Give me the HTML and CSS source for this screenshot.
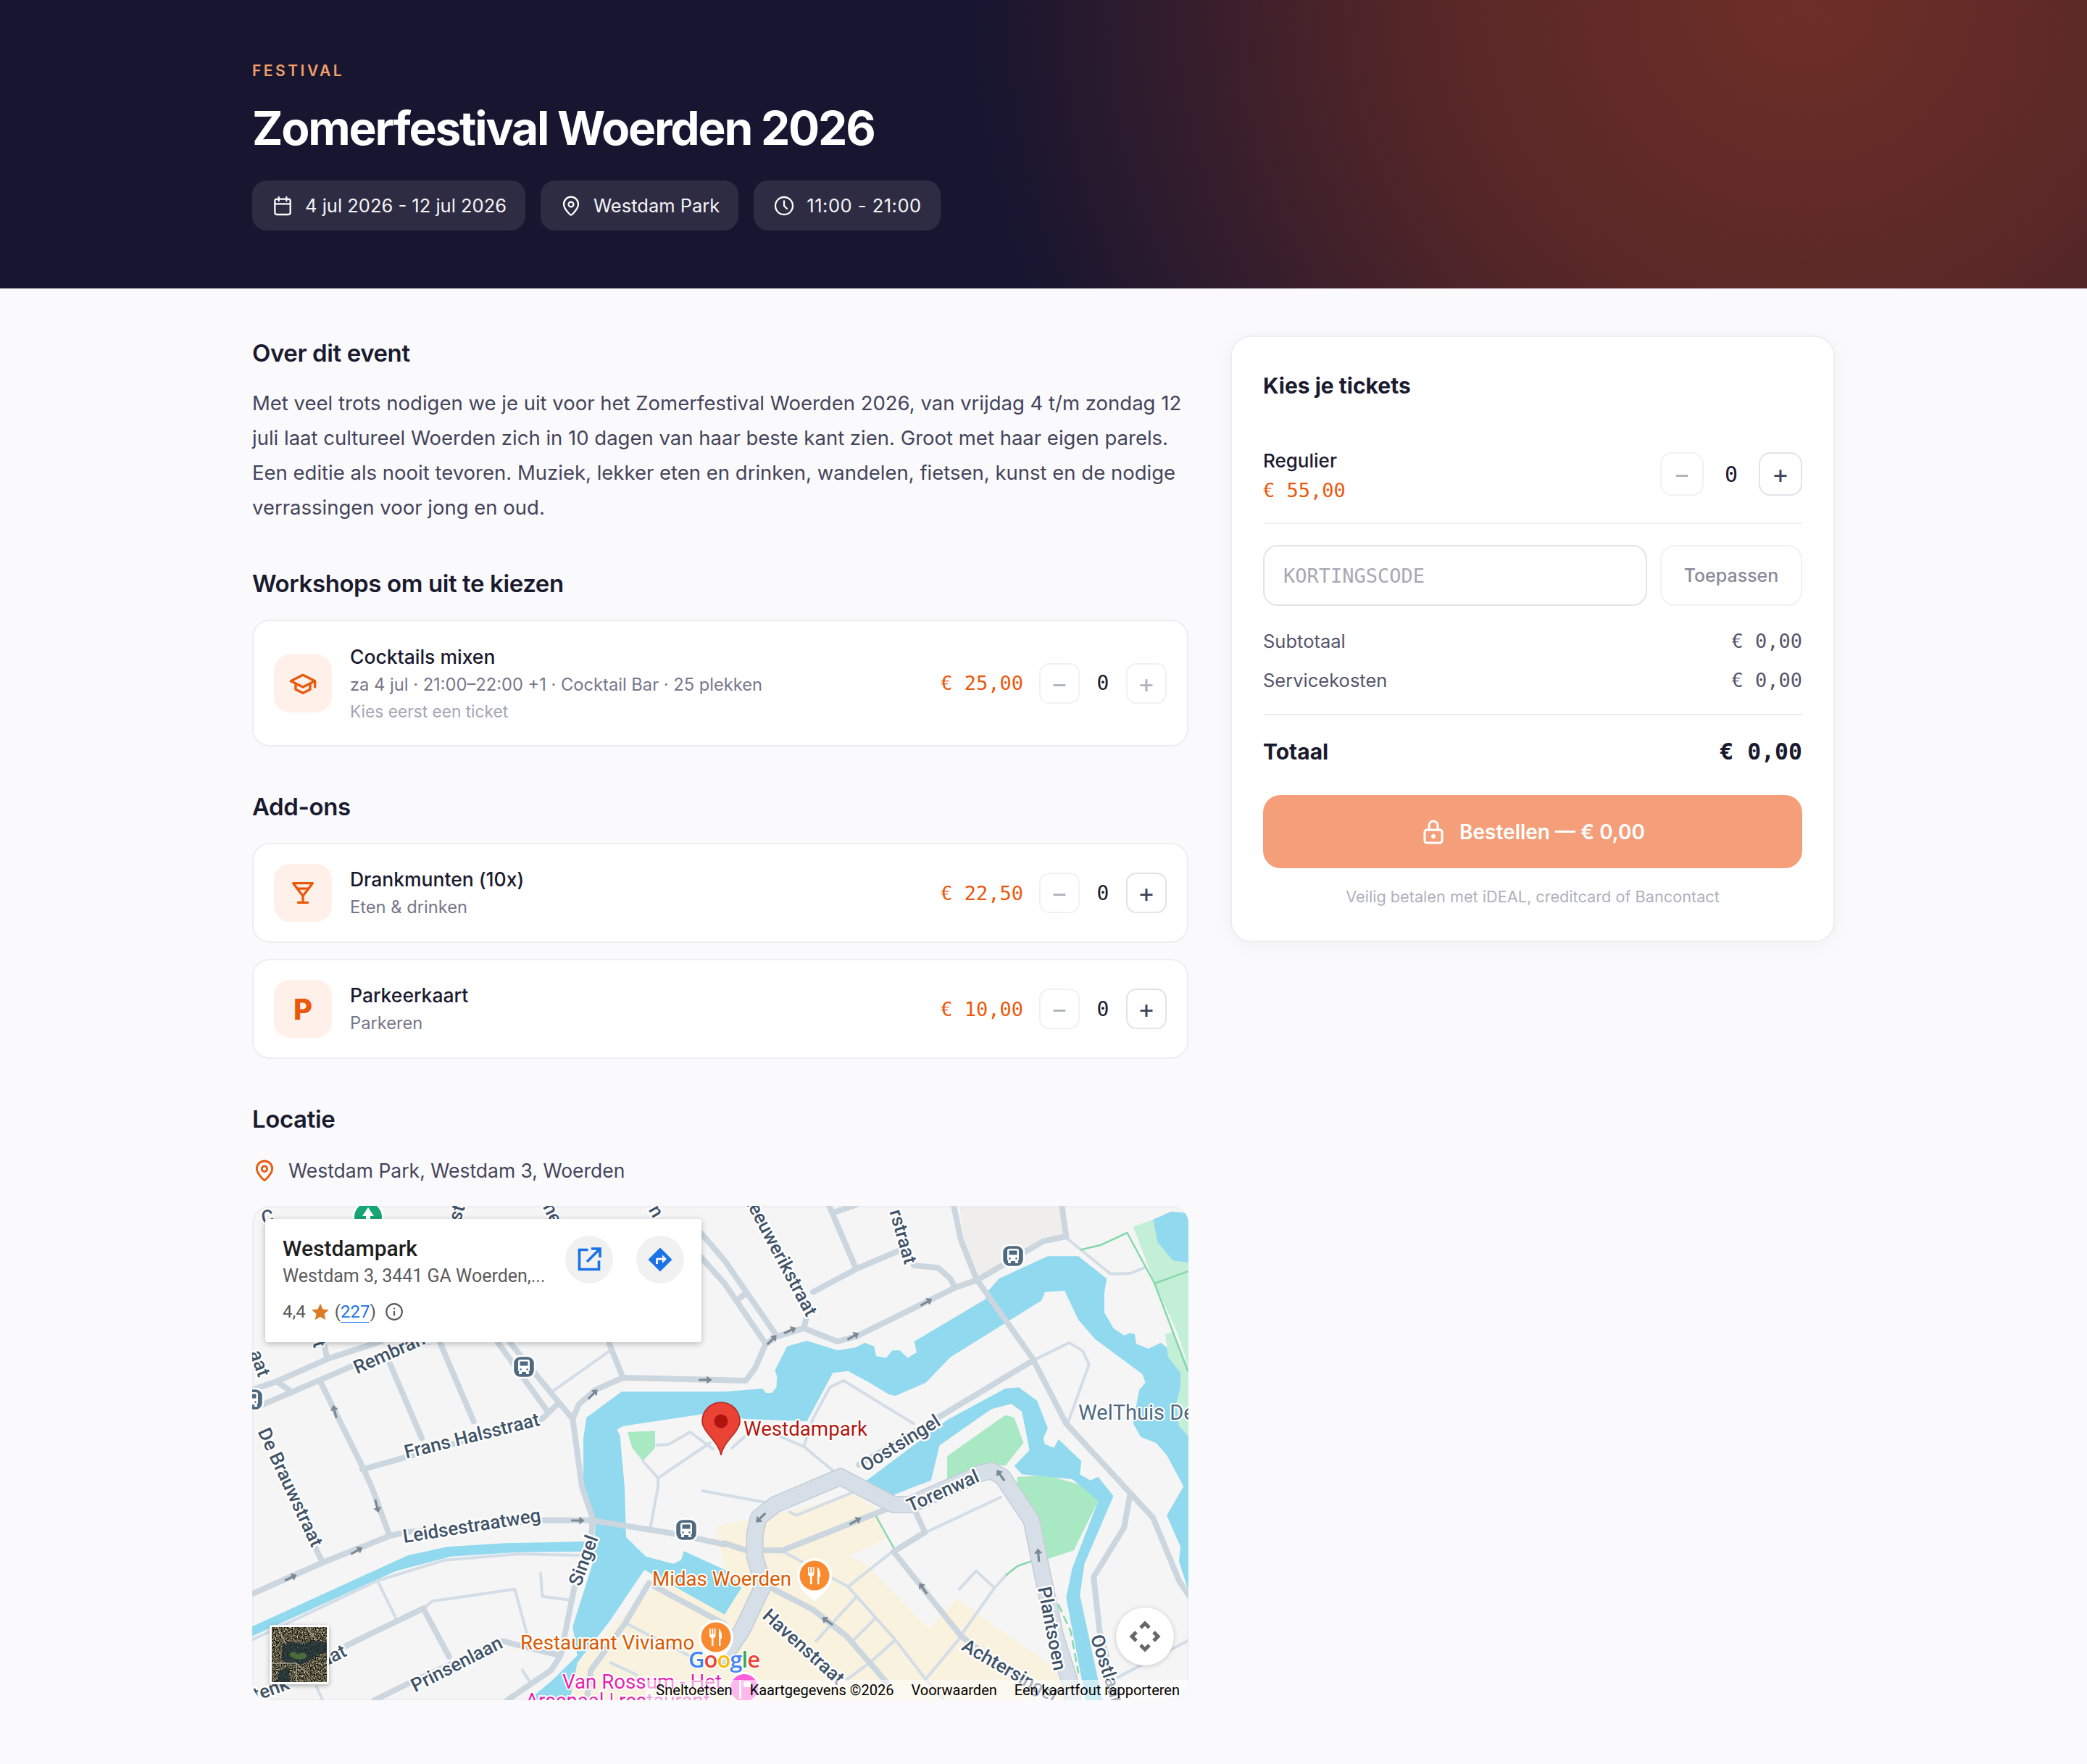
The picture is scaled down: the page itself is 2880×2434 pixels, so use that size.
FILE: index.html
```html
<!DOCTYPE html>
<html lang="nl">
<head>
  <meta charset="UTF-8">
  <meta name="viewport" content="width=device-width, initial-scale=1.0">
  <title>Zomerfestival Woerden 2026</title>
  <link rel="stylesheet" href="styles.css">
</head>
<body>
  <header class="hero">
    <div class="hero-inner">
      <div class="eyebrow">FESTIVAL</div>
      <h1>Zomerfestival Woerden 2026</h1>
      <div class="chips">
        <div class="chip">
          <svg class="chip-icon" viewBox="0 0 24 24"><rect x="4" y="5" width="16" height="16" rx="2"/><path d="M16 3v4M8 3v4M4 10h16"/></svg>
          4 jul 2026 - 12 jul 2026
        </div>
        <div class="chip">
          <svg class="chip-icon" viewBox="0 0 24 24"><circle cx="12" cy="10.5" r="2.6"/><path d="M12 21.5c-.6 0-7.5-6.2-7.5-11.2a7.5 7.5 0 0 1 15 0c0 5-6.9 11.2-7.5 11.2z"/></svg>
          Westdam Park
        </div>
        <div class="chip chip-time">
          <svg class="chip-icon" viewBox="0 0 24 24"><circle cx="12" cy="12" r="9"/><path d="M12 7v5l3 3"/></svg>
          11:00 - 21:00
        </div>
      </div>
    </div>
  </header>

  <main class="layout">
    <div class="content">
      <section class="section">
        <h2>Over dit event</h2>
        <p class="about">Met veel trots nodigen we je uit voor het Zomerfestival Woerden 2026, van vrijdag 4 t/m zondag 12 juli laat cultureel Woerden zich in 10 dagen van haar beste kant zien. Groot met haar eigen parels. Een editie als nooit tevoren. Muziek, lekker eten en drinken, wandelen, fietsen, kunst en de nodige verrassingen voor jong en oud.</p>
      </section>

      <section class="section">
        <h2 class="list-title">Workshops om uit te kiezen</h2>
        <div class="item item-workshop">
          <div class="item-icon">
            <svg viewBox="0 0 24 24"><path d="M22 10 12 5 2 10l10 5 10-5v5"/><path d="M6 12.2V17l6 3 6-3v-4.8"/></svg>
          </div>
          <div class="item-text">
            <div class="item-name">Cocktails mixen</div>
            <div class="item-meta">za 4 jul · 21:00–22:00 +1 · Cocktail Bar · 25 plekken</div>
            <div class="item-note">Kies eerst een ticket</div>
          </div>
          <div class="item-price">€ 25,00</div>
          <div class="qty">
            <button class="qty-btn off">−</button>
            <span class="qty-val">0</span>
            <button class="qty-btn off">+</button>
          </div>
        </div>
      </section>

      <section class="section">
        <h2 class="list-title">Add-ons</h2>
        <div class="item-list">
          <div class="item">
            <div class="item-icon">
              <svg viewBox="0 0 24 24"><path d="M4 4h16l-8 10.5z"/><path d="M7.5 8.5h9M12 14.5V20M8 20h8"/></svg>
            </div>
            <div class="item-text">
              <div class="item-name">Drankmunten (10x)</div>
              <div class="item-meta">Eten &amp; drinken</div>
            </div>
            <div class="item-price">€ 22,50</div>
            <div class="qty">
              <button class="qty-btn off">−</button>
              <span class="qty-val">0</span>
              <button class="qty-btn">+</button>
            </div>
          </div>
          <div class="item">
            <div class="item-icon item-icon-letter">P</div>
            <div class="item-text">
              <div class="item-name">Parkeerkaart</div>
              <div class="item-meta">Parkeren</div>
            </div>
            <div class="item-price">€ 10,00</div>
            <div class="qty">
              <button class="qty-btn off">−</button>
              <span class="qty-val">0</span>
              <button class="qty-btn">+</button>
            </div>
          </div>
        </div>
      </section>

      <section class="section section-last">
        <h2 class="location-title">Locatie</h2>
        <div class="address">
          <svg class="address-icon" viewBox="0 0 24 24"><circle cx="12" cy="10.5" r="2.6"/><path d="M12 21.5c-.6 0-7.5-6.2-7.5-11.2a7.5 7.5 0 0 1 15 0c0 5-6.9 11.2-7.5 11.2z"/></svg>
          Westdam Park, Westdam 3, Woerden
        </div>

        <div class="map">
          <!-- base map: coordinates are traced, so the drawing is stretched to fit -->
          <svg class="map-layer" viewBox="19 39 3070 2046" preserveAspectRatio="none">
            <path class="m-grey" d="M2338 30H2673L2683 160 2613 180 2398 330 2358 230Z"/>
            <path class="m-sand" d="M1568 1545L1540 1365 1788 1300 1998 1230 2068 1300 2093 1420 1978 1485 2038 1530 2238 1790 2328 1665 2648 1950 2698 2090H1060L1085 1930 1215 1760 1340 1620Z"/>
            <path class="m-pale" d="M2908 125L2973 95 2988 190 3038 265 3095 275V720L3048 550 2978 360Z"/>
            <path class="m-pale" d="M3013 570L3040 560 3095 720V1000L3058 950 3048 860 3063 790 3063 730 3023 665Z"/>
            <path class="m-green" d="M1250 975L1340 970 1340 1040 1300 1095 1265 1040Z"/>
            <path class="m-green" d="M2298 1075L2488 905 2518 915 2548 1020 2488 1115 2438 1105 2298 1170Z"/>
            <path class="m-green" d="M2528 1160L2628 1155 2738 1195 2793 1260 2713 1465 2628 1500 2603 1340 2528 1200Z"/>

            <path class="m-water" d="M1140 1500L1145 1340 1105 1200 1105 1000 1115 915 1230 808H1568L1693 795 1703 813 1723 813 1738 790 1740 745 1733 720 1773 620 1838 597 1938 637 1998 625 2028 605 2058 620 2065 660 2098 668 2118 637 2143 637 2168 668 2198 645 2190 600 2423 425 2433 390 2468 340 2628 247 2728 247 2821 340 2813 400 2813 480 2843 545 2878 575 2898 565 2913 570 2918 610 2958 630 2998 605 3018 625 3023 665 3063 730 3063 790 3048 860 3058 950 3095 1000V1620H3086L3058 1510 3063 1450 3018 1320 3073 1200 3018 1070 2983 1020 2933 995 2908 940 2923 830 2928 800 2948 770 2938 735 2783 590 2728 510 2683 390 2618 395 2608 430 2308 665 2228 770 2128 825 2108 820 2043 770 1973 722 1923 730 1838 930 1628 920 1568 885 1500 900 1235 950 1215 965 1225 990 1240 1200 1245 1410 1310 1490 1400 1520 1425 1505 1435 1468 1568 1545 1623 1620 1568 1730 1305 1545 1190 1760 1085 1930 1060 2090H920L1005 2000 1085 1900 1070 1780Z"/>
            <path class="m-water" d="M2008 1200L2298 925 2488 795 2533 790 2593 845 2628 960 2613 1000 2618 1025 2648 1040 2663 1005 2738 1095 2733 1150 2768 1175 2793 1160 2818 1200 2843 1240 2748 1520 2733 1650 2808 2090H2753L2688 1660 2708 1540 2793 1260 2738 1200 2708 1170 2543 1150 2518 1115 2568 1050 2543 890 2508 858 2443 880 2273 1030 2245 1175 2122 1235Z"/>
            <path class="m-water" d="M2973 95L3033 62 3095 70V275L3038 265 2988 190Z"/>
            <path class="m-water" d="M19 1780L530 1485 660 1450 850 1435 1110 1428 1100 1470 890 1472 670 1490 490 1550 19 1820Z"/>

            <path class="m-thin" d="M2578 680L2698 605 2743 640 2763 695 2693 940M2693 175L2833 320 2898 318 2943 295M1593 1040L1633 995M1828 1035L1753 995M1828 1035L1858 920 1913 790 1958 762 2188 940M1828 1035L1923 1135M1300 1095L1350 1165 1520 1020M1345 1030L1385 1025 1455 975 1530 1045M1350 1165V1200M1350 1200L1325 1370M1495 1218L1568 1235 1698 1265M19 1835L430 1590 650 1505 890 1480 1090 1485M430 1590L490 1745M580 1705L610 1675 880 1625 920 1810M965 1560L970 1655 1060 1670M905 1960L935 2020M230 2030L250 2085M2128 1460L1973 1615M1768 1475L1973 1615 2128 1835 2228 2000 2288 2085M1998 1660L1868 1840M2063 1745L1988 1840M2128 1835L2053 1920M2033 1940L1968 2000M2338 1825L2453 1620 2493 1565M2338 1625L2393 1550 2453 1620M2338 1830L2233 1990M2228 1390L2473 1245M2858 1990L3086 1840M1250 1770L1450 1900M1195 1930L1280 1980M1000 810L1190 640M1782 1305L1802 1320 1988 1225"/>
            <path class="m-trail" d="M2738 220L2803 200 2888 150 2978 360 3086 720M2978 360L3086 310M2063 1320L2123 1455M2493 1565L2528 1530 2573 1510"/>
            <path class="m-trail m-dash" d="M2663 1690L2703 1800 2728 1970"/>
            <path class="m-road" d="M19 800L100 765 270 670 440 600M19 880L240 760 360 695 600 600M105 770L150 810M255 610L265 670M240 760L385 1130 410 1200 470 1405M380 1130L970 920 1020 860M470 690L575 1000M635 605L745 930M825 605L985 885M865 605L1010 830 1070 920 1100 1200 1135 1330 1130 1440 1075 1620 1040 1840 1030 1900 1000 1960 855 2085M1070 920L1090 860 1145 800 1235 750 1568 760 1638 762 1668 710 1703 610 1738 580 1828 545 1938 600 1998 580 2328 375 2398 345 2613 185 2688 165 2673 30M1190 610L1235 750M1490 150L1568 265 1738 575M1490 250L1568 360 1703 610M1608 430L1638 400M1828 545L1838 490M1858 395L2008 295 2138 225M1908 30L1998 295M1928 65L1998 35M2188 285L2268 295 2308 340 2323 375M2318 30L2343 180 2393 340 2578 670 2688 940 2878 1200 2973 1330 3058 1590 3095 1660M2008 1110L2268 915 2578 680M19 1645L250 1515 470 1405 520 1390 970 1340 1130 1340 1400 1395 1568 1440M225 1450L250 1515M310 1870L580 1705M420 2085L540 2010 840 1840 900 1860 1030 1900M580 1705L665 1905M1320 1600L1240 1770 1130 1960 1115 2085M1340 1615L1568 1770M1728 1625L1858 1710 1968 1820 2058 1950 2098 2010M1568 1435L1638 1465 1758 1465 2107 1290M2194 1305L2225 1390 2122 1470 2344 1820 2518 1990M2898 1230L2878 1370 2778 1575 2798 1800 2820 1900"/>
            <path class="m-ring-edge" d="M1568 1900L1623 1800 1695 1610 1667 1490V1400L1679 1330 1734 1275 1948 1160 2122 1275H2178L2408 1145 2443 1135 2479 1160 2574 1340 2613 1580 2653 1820 2698 2000 2710 2085"/>
            <path class="m-ring" d="M1568 1900L1623 1800 1695 1610 1667 1490V1400L1679 1330 1734 1275 1948 1160 2122 1275H2178L2408 1145 2443 1135 2479 1160 2574 1340 2613 1580 2653 1820 2698 2000 2710 2085"/>
          </svg>

          <!-- labels, arrows and pins sit on the real pixel grid -->
          <svg class="map-layer" viewBox="0 0 1292 682">
            <defs>
              <path id="road-arrow" d="M-11 -2H3V-7L12 0 3 7V2H-11Z"/>
              <g id="bus-stop">
                <rect x="-15" y="-15" width="30" height="30" rx="10" class="bus-bg"/>
                <rect x="-8" y="-10" width="16" height="17" rx="3" class="bus-body"/>
                <rect x="-5.5" y="-7.5" width="11" height="6" class="bus-glass"/>
                <path class="bus-body" d="M-7 7h4v3h-4zM3 7h4v3h-4z"/>
                <circle cx="-4.5" cy="3.5" r="1.3" class="bus-glass"/>
                <circle cx="4.5" cy="3.5" r="1.3" class="bus-glass"/>
              </g>
              <g id="food-pin">
                <path class="pin-rim" d="M0 36C-4 30 -24 20 -24 0A24 24 0 0 1 24 0C24 20 4 30 0 36Z"/>
                <circle r="20.5" class="pin-food"/>
                <path class="pin-glyph" d="M-9 -12V-3C-9 0 -7.5 1 -6 1V12H-3.5V1C-2 1 -.5 0 -.5 -3V-12H-2.2V-4H-3.7V-12H-5.7V-4H-7.2V-12ZM3 -12C6 -11 8 -7 8 -2V2H6.5V12H4V-12Z"/>
              </g>
            </defs>

            <g class="arrows">
              <use href="#road-arrow" transform="translate(114 284) rotate(-105) scale(.8)"/>
              <use href="#road-arrow" transform="translate(470 260) rotate(-45) scale(.8)"/>
              <use href="#road-arrow" transform="translate(625 240) scale(.8)"/>
              <use href="#road-arrow" transform="translate(717 185) rotate(-45) scale(.8)"/>
              <use href="#road-arrow" transform="translate(742 172) rotate(-25) scale(.8)"/>
              <use href="#road-arrow" transform="translate(829 180) rotate(-30) scale(.8)"/>
              <use href="#road-arrow" transform="translate(930 133) rotate(-30) scale(.8)"/>
              <use href="#road-arrow" transform="translate(172 414) rotate(75) scale(.8)"/>
              <use href="#road-arrow" transform="translate(144 476) rotate(-30) scale(.8)"/>
              <use href="#road-arrow" transform="translate(53 513) rotate(-25) scale(.8)"/>
              <use href="#road-arrow" transform="translate(449 434) scale(.8)"/>
              <use href="#road-arrow" transform="translate(702 430) rotate(135) scale(.8)"/>
              <use href="#road-arrow" transform="translate(832 435) rotate(-30) scale(.8)"/>
              <use href="#road-arrow" transform="translate(1085 482) rotate(-95) scale(.8)"/>
              <use href="#road-arrow" transform="translate(926 528) rotate(-125) scale(.8)"/>
              <use href="#road-arrow" transform="translate(794 573) rotate(-145) scale(.8)"/>
              <use href="#road-arrow" transform="translate(1033 372) rotate(-125) scale(.8)"/>
            </g>

            <g class="road-labels">
              <text transform="translate(303 317) rotate(-14)">Frans Halsstraat</text>
              <text class="from-start" transform="translate(141 224) rotate(-24)">Rembrandtstraat</text>
              <text transform="translate(53 388) rotate(65)">De Brauwstraat</text>
              <text transform="translate(303 441) rotate(-9)">Leidsestraatweg</text>
              <text transform="translate(457 489) rotate(-70)">Singel</text>
              <text transform="translate(282 632) rotate(-27)">Prinsenlaan</text>
              <text class="from-end" transform="translate(128 612) rotate(-27)">straat</text>
              <text class="from-start" transform="translate(2 675) rotate(-20)">tenk</text>
              <text class="from-end" transform="translate(773 150) rotate(62)">Leeuwerikstraat</text>
              <text class="from-end" transform="translate(909 79) rotate(74)">rstraat</text>
              <text transform="translate(894 327) rotate(-32)">Oostsingel</text>
              <text transform="translate(953 393) rotate(-24)">Torenwal</text>
              <text transform="translate(1104 583) rotate(79)">Plantsoen</text>
              <text transform="translate(761 608) rotate(42)">Havenstraat</text>
              <text class="from-start" transform="translate(982 604) rotate(30)">Achtersingel</text>
              <text class="from-start" transform="translate(1165 592) rotate(72)">Oostlaan</text>
              <text transform="translate(21 15) rotate(-10)">C</text>
              <text transform="translate(282 9) rotate(-72)">st</text>
              <text transform="translate(415 10) rotate(65)">ne</text>
              <text transform="translate(558 7) rotate(60)">n</text>
              <text transform="translate(11 217) rotate(70)">aat</text>
              <text transform="translate(93 190) rotate(72)">t</text>
            </g>

            <use href="#bus-stop" x="375" y="222"/>
            <use href="#bus-stop" x="1050" y="69"/>
            <use href="#bus-stop" x="599" y="447"/>
            <use href="#bus-stop" x="0" y="267"/>

            <circle cx="160" cy="15" r="22" class="park-rim"/>
            <circle cx="160" cy="15" r="19" class="park-dot"/>
            <path class="park-tree" d="M160 2L168 14H163V22H157V14H152Z"/>

            <g class="poi-labels">
              <text x="678" y="317" class="poi-red">Westdampark</text>
              <text x="1140" y="295" class="poi-slate">WelThuis De</text>
              <text x="552" y="524" class="poi-food">Midas Woerden</text>
              <text x="370" y="612" class="poi-food">Restaurant Viviamo</text>
              <text x="428" y="666" class="poi-pink">Van Rossum - Het</text>
              <text x="377" y="692" class="poi-pink">Arsenaal | restaurant</text>
            </g>

            <use href="#food-pin" x="776" y="510"/>
            <use href="#food-pin" x="640" y="595"/>

            <circle cx="679" cy="665" r="22" class="park-rim"/>
            <circle cx="679" cy="665" r="19" class="pin-pink"/>
            <path class="pin-glyph" d="M672 654H675V680H672ZM678 656H688V664H678Z"/>

            <path class="pin-red" d="M647 344C644 325 621 312 621 297A26 26 0 0 1 673 297C673 312 650 325 647 344Z"/>
            <circle cx="647" cy="297" r="9.5" class="pin-red-dot"/>

            <text x="602" y="637" class="google"><tspan class="g-blue">G</tspan><tspan class="g-red">o</tspan><tspan class="g-yellow">o</tspan><tspan class="g-blue">g</tspan><tspan class="g-green">l</tspan><tspan class="g-red">e</tspan></text>
          </svg>

          <div class="place-card">
            <div class="place-info">
              <div class="place-name">Westdampark</div>
              <div class="place-addr">Westdam 3, 3441 GA Woerden,...</div>
              <div class="place-rating">
                4,4
                <svg class="place-star" viewBox="0 0 24 24"><path d="M12 1.5l3.2 7.2 7.8.8-5.9 5.2 1.7 7.7L12 18.4 5.2 22.4l1.7-7.7L1 9.5l7.8-.8z"/></svg>
                <span>(<a class="place-count">227</a>)</span>
                <svg class="place-i" viewBox="0 0 24 24"><circle cx="12" cy="12" r="10"/><path d="M12 11v6M12 7v1.8"/></svg>
              </div>
            </div>
            <div class="place-action">
              <svg viewBox="0 0 24 24"><path d="M11 3H3V21H21V13"/><path d="M14 2h8v8M22 2L10 14"/></svg>
            </div>
            <div class="place-action">
              <svg class="filled" viewBox="0 0 24 24"><path d="M12 1L23 12 12 23 1 12Z"/><path class="cut" d="M8 16v-4c0-1 .6-1.5 1.5-1.5H14V7.5L18 11.5 14 15.5V12.5H10V16Z"/></svg>
            </div>
          </div>

          <div class="sat-thumb">
            <svg viewBox="0 0 76 76">
              <defs>
                <filter id="sat-grain" x="0" y="0" width="100%" height="100%" color-interpolation-filters="sRGB">
                  <feTurbulence type="fractalNoise" baseFrequency=".6" numOctaves="2" seed="4"/>
                  <feColorMatrix values="1.3 1.3 0 0 -.95  1.3 1.3 0 0 -.97  1.2 1.2 0 0 -.95  0 0 0 0 1"/>
                </filter>
              </defs>
              <rect width="76" height="76" filter="url(#sat-grain)"/>
              <path class="sat-water" d="M14 24C24 16 38 26 48 22 58 16 68 22 76 20V36C66 34 58 44 50 48 38 54 20 54 14 44ZM10 60L22 56 26 76H8Z"/>
              <path class="sat-park" d="M24 38C28 33 34 34 36 38 42 33 50 36 48 42 42 46 30 46 24 38Z"/>
              <path class="sat-road" d="M0 50L34 50 52 66M34 50L34 76M8 0L20 24M48 0L62 18"/>
            </svg>
          </div>

          <button class="map-full" aria-label="Volledig scherm">
            <svg viewBox="0 0 48 48"><path d="M18 12l6-6 6 6M18 36l6 6 6-6M12 18l-6 6 6 6M36 18l6 6-6 6"/></svg>
          </button>

          <div class="map-attrib">
            <span>Sneltoetsen</span>
            <span>Kaartgegevens ©2026</span>
            <span>Voorwaarden</span>
            <span>Een kaartfout rapporteren</span>
          </div>
        </div>
      </section>
    </div>

    <aside class="tickets">
      <h3>Kies je tickets</h3>
      <div class="ticket-row">
        <div class="ticket-info">
          <div class="ticket-name">Regulier</div>
          <div class="ticket-price">€ 55,00</div>
        </div>
        <div class="qty qty-big">
          <button class="qty-btn off">−</button>
          <span class="qty-val">0</span>
          <button class="qty-btn">+</button>
        </div>
      </div>
      <div class="coupon">
        <input class="coupon-input" type="text" placeholder="KORTINGSCODE">
        <button class="coupon-btn">Toepassen</button>
      </div>
      <div class="sum-row"><span>Subtotaal</span><span class="sum-val">€ 0,00</span></div>
      <div class="sum-row"><span>Servicekosten</span><span class="sum-val">€ 0,00</span></div>
      <div class="sum-total"><span>Totaal</span><span class="sum-total-val">€ 0,00</span></div>
      <button class="order-btn">
        <svg viewBox="0 0 24 24"><rect x="4" y="10" width="16" height="12" rx="2"/><path d="M8 10V6a4 4 0 0 1 8 0v4"/><circle cx="12" cy="16" r="1"/></svg>
        Bestellen — € 0,00
      </button>
      <div class="secure">Veilig betalen met iDEAL, creditcard of Bancontact</div>
    </aside>
  </main>
</body>
</html>
```

FILE: styles.css
```css
* {
  box-sizing: border-box;
}
body {
  margin: 0;
  background: #fafafc;
  color: #1a1a2e;
  font-family: "Inter", "Noto Sans", Arial, sans-serif;
}

/* hero */
.hero {
  height: 398px;
  background: radial-gradient(1150px 1100px at 2490px 0, #6e2f27 0, #572727 45%, #171530 100%), #171530;
}
.hero-inner {
  width: 2184px;
  margin: 0 auto;
  padding-top: 84px;
}
.eyebrow {
  font-size: 21px;
  line-height: 28px;
  font-weight: 600;
  letter-spacing: 3.5px;
  color: #f0a06a;
}
h1 {
  margin: 25px 0 0;
  font-size: 64px;
  line-height: 80px;
  font-weight: 700;
  letter-spacing: -2.2px;
  color: #fff;
}
.chips {
  display: flex;
  gap: 21px;
  margin-top: 32px;
}
.chip {
  display: flex;
  align-items: center;
  gap: 15px;
  height: 69px;
  padding: 0 26px;
  border-radius: 20px;
  background: #2e2c42;
  color: #f4f4f6;
  font-size: 25.5px;
}
.chip-time {
  letter-spacing: .5px;
}
.chip-icon {
  width: 32px;
  height: 32px;
  fill: none;
  stroke: #fff;
  stroke-width: 1.7;
  stroke-linecap: round;
  stroke-linejoin: round;
}

/* page columns */
.layout {
  display: grid;
  grid-template-columns: 1292px 834px;
  gap: 58px;
  width: 2184px;
  margin: 0 auto;
  padding: 65px 0 89px;
  align-items: start;
}
.section {
  margin-bottom: 60px;
}
.section-last {
  margin-bottom: 0;
}
h2 {
  margin: 1px 0 22px;
  font-size: 33px;
  line-height: 46px;
  font-weight: 600;
  letter-spacing: -.4px;
}
.list-title {
  margin-bottom: 27px;
}
.location-title {
  margin-bottom: 24px;
}
.about {
  margin: 0 0 -2px;
  font-size: 27.5px;
  line-height: 48px;
  color: #44445a;
}

/* workshop and add-on rows */
.item-list {
  display: flex;
  flex-direction: column;
  gap: 22px;
}
.item {
  display: flex;
  align-items: center;
  height: 138px;
  padding: 0 28px;
  background: #fff;
  border: 2px solid #eeeef1;
  border-radius: 24px;
}
.item-workshop {
  height: 175px;
}
.item-icon {
  flex: none;
  display: flex;
  align-items: center;
  justify-content: center;
  width: 80px;
  height: 80px;
  margin-right: 25px;
  border-radius: 22px;
  background: #fff0e9;
}
.item-icon svg {
  width: 40px;
  height: 40px;
  fill: none;
  stroke: #ea580c;
  stroke-width: 2;
  stroke-linecap: round;
  stroke-linejoin: round;
}
.item-icon-letter {
  color: #ea580c;
  font-size: 40px;
  font-weight: 800;
}
.item-text {
  flex: 1;
}
.item-name {
  font-size: 26.5px;
  line-height: 36px;
  font-weight: 500;
}
.item-meta {
  margin-top: 4px;
  font-size: 23.7px;
  line-height: 34px;
  color: #77778a;
}
.item-note {
  margin-top: 4px;
  font-size: 22.7px;
  line-height: 32px;
  color: #a6a6b3;
}
.item-price,
.ticket-price {
  font-family: "DejaVu Sans Mono", "Liberation Mono", monospace;
  font-size: 27px;
  color: #ea580c;
}
.item-price {
  margin-right: 22px;
}

/* quantity stepper */
.qty {
  display: flex;
  align-items: center;
}
.qty-btn {
  width: 56px;
  height: 56px;
  padding: 0;
  background: #fff;
  border: 2px solid #e3e3e8;
  border-radius: 14px;
  color: #44445a;
  font-family: "Inter", sans-serif;
  font-size: 36px;
  font-weight: 400;
  line-height: 1;
}
.qty-btn.off {
  border-color: #f1f1f4;
  color: #b4b4be;
}
.qty-val {
  width: 64px;
  text-align: center;
  font-family: "DejaVu Sans Mono", "Liberation Mono", monospace;
  font-size: 28px;
}
.qty-big .qty-btn {
  width: 60px;
  height: 60px;
  border-radius: 16px;
}
.qty-big .qty-val {
  width: 76px;
  font-size: 30px;
}

/* location */
.address {
  display: flex;
  align-items: center;
  gap: 16px;
  height: 48px;
  margin-bottom: 25px;
  font-size: 26.5px;
  color: #44445a;
}
.address-icon {
  width: 34px;
  height: 34px;
  fill: none;
  stroke: #ea580c;
  stroke-width: 2;
  stroke-linecap: round;
  stroke-linejoin: round;
}

/* map */
.map {
  position: relative;
  width: 1292px;
  height: 682px;
  overflow: hidden;
  background: #f5f5f5;
  border-radius: 24px;
  box-shadow: inset 0 0 0 2px #eeeef1;
}
.map-layer {
  position: absolute;
  top: 0;
  left: 0;
  width: 100%;
  height: 100%;
  font-family: "Roboto", sans-serif;
}
.map-layer path {
  vector-effect: non-scaling-stroke;
}
.m-grey { fill: #efeeec; }
.m-sand { fill: #f9f2de; }
.m-pale { fill: #c3efd6; }
.m-green { fill: #a8e8c2; }
.m-water { fill: #90d9ee; }
.m-road,
.m-thin,
.m-trail,
.m-ring,
.m-ring-edge {
  fill: none;
  stroke-linecap: round;
  stroke-linejoin: round;
}
.m-road { stroke: #cbd6df; stroke-width: 8px; }
.m-thin { stroke: #d3dde8; stroke-width: 4px; }
.m-trail { stroke: #85d8ab; stroke-width: 2.5px; }
.m-dash { stroke-dasharray: 10 8; }
.m-ring-edge { stroke: #c3cdd6; stroke-width: 24px; }
.m-ring { stroke: #d6dfe7; stroke-width: 21px; }

.arrows { fill: #7c8994; }
.road-labels text {
  font-size: 26px;
  font-weight: 500;
  fill: #3f5368;
  stroke: #fff;
  stroke-width: 5px;
  stroke-linejoin: round;
  paint-order: stroke;
  text-anchor: middle;
  dominant-baseline: central;
}
.road-labels .from-start { text-anchor: start; }
.road-labels .from-end { text-anchor: end; }
.poi-labels text {
  font-size: 27.7px;
  stroke: #fff;
  stroke-width: 4px;
  stroke-linejoin: round;
  paint-order: stroke;
}
.poi-red { fill: #b3170f; }
.poi-labels .poi-slate { fill: #4f6a7f; font-size: 29px; }
.poi-food { fill: #d95a00; }
.poi-pink { fill: #e81fb0; }
.bus-bg { fill: #4f6a80; stroke: #fff; stroke-width: 2.5px; }
.bus-body { fill: #fff; }
.bus-glass { fill: #4f6a80; }
.park-rim { fill: #fff; }
.park-dot { fill: #17a673; }
.park-tree { fill: #fff; }
.pin-rim { fill: #fff; }
.pin-food { fill: #f98a2d; }
.pin-glyph { fill: #fff; }
.pin-pink { fill: #ff5fd8; }
.pin-red { fill: #ea4335; stroke: #b3261e; stroke-width: 1.5px; }
.pin-red-dot { fill: #b0140f; }
.google {
  font-family: "Open Sans", sans-serif;
  font-size: 31px;
  font-weight: 600;
  letter-spacing: -1px;
  stroke: #fff;
  stroke-width: 3px;
  paint-order: stroke;
}
.g-blue { fill: #4285f4; }
.g-red { fill: #ea4335; }
.g-yellow { fill: #fbbc05; }
.g-green { fill: #34a853; }

.place-card {
  position: absolute;
  top: 18px;
  left: 18px;
  display: flex;
  width: 602px;
  height: 170px;
  padding: 23px 24px;
  gap: 32px;
  background: #fff;
  border-radius: 4px;
  box-shadow: 0 2px 8px rgba(0, 0, 0, .25);
  font-family: "Roboto", sans-serif;
}
.place-info {
  flex: 1;
  min-width: 0;
}
.place-name {
  font-size: 30px;
  line-height: 36px;
  font-weight: 500;
  color: #1f1f1f;
}
.place-addr {
  margin-top: 4px;
  font-size: 25px;
  line-height: 32px;
  white-space: nowrap;
  color: #5b5b5b;
}
.place-rating {
  display: flex;
  align-items: center;
  gap: 7px;
  margin-top: 17px;
  font-size: 24px;
  line-height: 32px;
  color: #5b5b5b;
}
.place-star {
  width: 26px;
  height: 26px;
  fill: #dc7a24;
}
.place-count {
  color: #1a73e8;
  border-bottom: 1px solid #1a73e8;
}
.place-i {
  width: 26px;
  height: 26px;
  margin-left: 5px;
  fill: none;
  stroke: #5b5b5b;
  stroke-width: 2;
}
.place-action {
  flex: none;
  display: flex;
  align-items: center;
  justify-content: center;
  width: 66px;
  height: 66px;
  border-radius: 50%;
  background: #f1f1f1;
}
.place-action svg {
  width: 36px;
  height: 36px;
  fill: none;
  stroke: #1a73e8;
  stroke-width: 2.4;
}
.place-action svg.filled {
  fill: #1a73e8;
  stroke: none;
}
.place-action .cut {
  fill: #f1f1f1;
}

.sat-thumb {
  position: absolute;
  left: 24px;
  top: 578px;
  width: 82px;
  height: 82px;
  padding: 3px;
  background: #fff;
  border-radius: 4px;
  box-shadow: 0 2px 6px rgba(0, 0, 0, .3);
}
.sat-thumb svg {
  display: block;
  width: 100%;
  height: 100%;
}
.sat-water { fill: #1e3036; opacity: .8; }
.sat-park { fill: #4a6b3c; }
.sat-road { fill: none; stroke: #a59f90; stroke-width: 1.5; }

.map-full {
  position: absolute;
  left: 1192px;
  top: 554px;
  width: 80px;
  height: 80px;
  padding: 16px;
  background: #fff;
  border: 0;
  border-radius: 50%;
  box-shadow: 0 1px 6px rgba(0, 0, 0, .2);
}
.map-full svg {
  display: block;
  width: 100%;
  height: 100%;
  fill: none;
  stroke: #666;
  stroke-width: 5;
  stroke-linejoin: miter;
}
.map-attrib {
  position: absolute;
  right: 0;
  bottom: 0;
  left: 543px;
  display: flex;
  justify-content: flex-end;
  gap: 24px;
  height: 28px;
  padding-right: 12px;
  background: rgba(255, 255, 255, .55);
  color: #000;
  font-family: "Roboto", sans-serif;
  font-size: 20px;
  line-height: 28px;
}

/* ticket panel */
.tickets {
  height: 837px;
  padding: 43px 43px 44px;
  background: #fff;
  border: 2px solid #eeeef1;
  border-radius: 28px;
  box-shadow: 0 4px 24px rgba(0, 0, 0, .04);
}
h3 {
  margin: 0;
  font-size: 30px;
  line-height: 48px;
  font-weight: 700;
}
.ticket-row {
  display: flex;
  align-items: center;
  justify-content: space-between;
  height: 108px;
  margin-top: 59px;
  padding-bottom: 28px;
  border-bottom: 2px solid #f1f1f4;
}
.ticket-info {
  margin-top: 6px;
}
.ticket-name {
  font-size: 26px;
  line-height: 40px;
  font-weight: 500;
}
.ticket-price {
  line-height: 42px;
}
.coupon {
  display: flex;
  gap: 18px;
  margin-top: 29px;
}
.coupon-input {
  width: 530px;
  height: 84px;
  padding: 0 26px;
  background: #fff;
  border: 2px solid #e4e4e8;
  border-radius: 20px;
  font-family: "DejaVu Sans Mono", monospace;
  font-size: 27px;
}
.coupon-input::placeholder {
  color: #a8a8b3;
  opacity: 1;
}
.coupon-btn {
  flex: 1;
  height: 84px;
  background: #fff;
  border: 2px solid #f1f1f4;
  border-radius: 20px;
  color: #8a8a98;
  font-family: "Inter", sans-serif;
  font-size: 25px;
  font-weight: 500;
}
.sum-row {
  display: flex;
  justify-content: space-between;
  align-items: center;
  height: 54px;
  font-size: 25.5px;
  color: #55556a;
}
.coupon + .sum-row {
  margin-top: 21px;
}
.sum-val {
  font-family: "DejaVu Sans Mono", monospace;
  font-size: 27px;
}
.sum-total {
  display: flex;
  justify-content: space-between;
  align-items: center;
  height: 88px;
  margin-top: 20px;
  padding-top: 14px;
  border-top: 2px solid #eeeef1;
  font-size: 30px;
  font-weight: 700;
}
.sum-total-val {
  font-family: "DejaVu Sans Mono", monospace;
  font-size: 31.5px;
}
.order-btn {
  display: flex;
  align-items: center;
  justify-content: center;
  gap: 18px;
  width: 100%;
  height: 101px;
  margin-top: 24px;
  background: #f49f7a;
  border: 0;
  border-radius: 24px;
  color: #fff;
  font-family: "Inter", sans-serif;
  font-size: 28px;
  font-weight: 600;
}
.order-btn svg {
  width: 36px;
  height: 36px;
  fill: none;
  stroke: #fff;
  stroke-width: 2;
  stroke-linecap: round;
  stroke-linejoin: round;
}
.secure {
  margin-top: 22px;
  text-align: center;
  font-size: 21.7px;
  line-height: 34px;
  color: #b0b0bc;
}
```
